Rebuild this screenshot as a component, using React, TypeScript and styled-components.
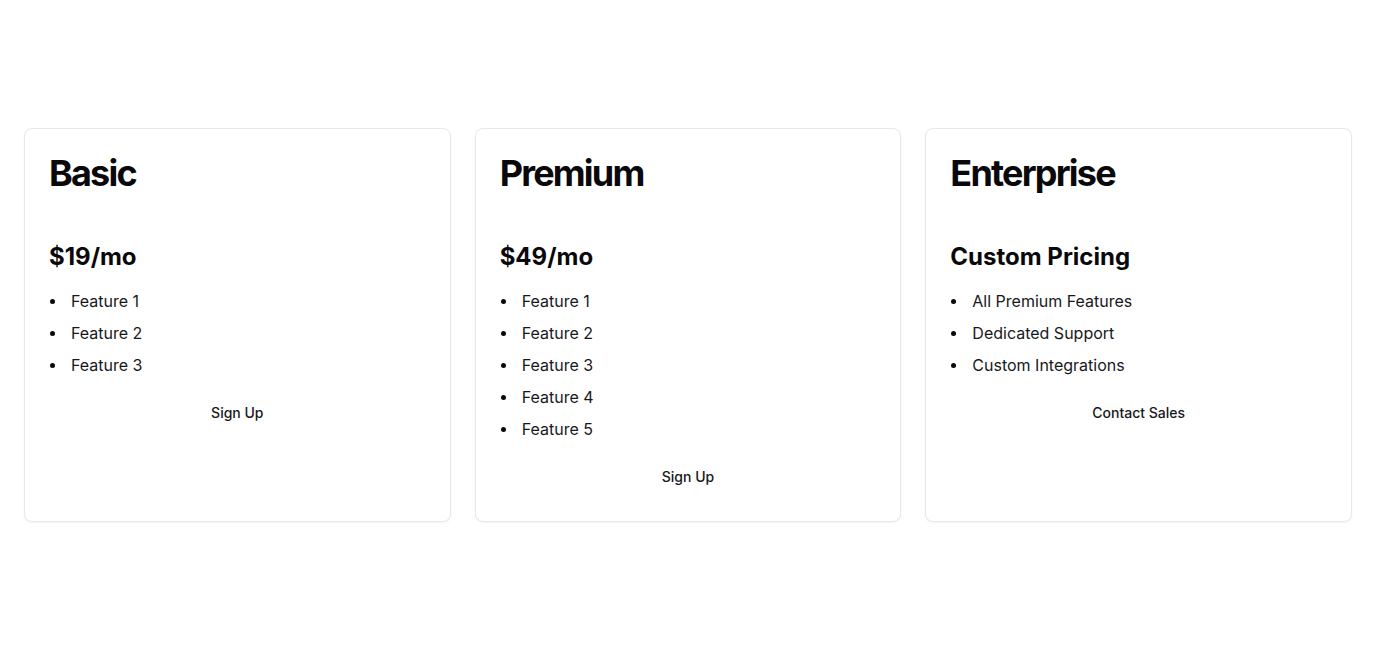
import React from "react";
import styled, { createGlobalStyle } from "styled-components";

const GlobalStyle = createGlobalStyle`
  * { box-sizing: border-box; }
  html, body { margin: 0; padding: 0; background: #ffffff; }
  body {
    font-family: Inter, "Liberation Sans", Arial, sans-serif;
    color: #09090b;
    -webkit-font-smoothing: antialiased;
  }
`;

const Page = styled.main`
  min-height: 650px;
  display: flex;
  align-items: center;
  padding: 0 24px;
`;

const Grid = styled.div`
  width: 100%;
  display: grid;
  grid-template-columns: repeat(3, 1fr);
  gap: 24px;
`;

const Card = styled.section`
  display: flex;
  flex-direction: column;
  border: 1px solid #e8e8ea;
  border-radius: 8px;
  background: #ffffff;
  box-shadow: 0 1px 2px rgba(0, 0, 0, 0.05);
`;

const Header = styled.div`
  padding: 24px 24px 24px;
`;

const Title = styled.h2`
  margin: 0;
  font-size: 36px;
  line-height: 40px;
  font-weight: 700;
  letter-spacing: -0.05em;
  color: #09090b;
`;

const Content = styled.div`
  padding: 0 24px 25px;
  display: flex;
  flex-direction: column;
`;

const Price = styled.p`
  margin: 24px 0 16px;
  font-size: 24px;
  line-height: 32px;
  font-weight: 700;
  color: #09090b;
`;

const List = styled.ul`
  margin: 0;
  padding: 0;
  list-style: none;
  display: flex;
  flex-direction: column;
  gap: 8px;
`;

const Item = styled.li`
  display: flex;
  align-items: center;
  font-size: 16px;
  line-height: 24px;
  color: #18181b;
`;

const Bullet = styled.span`
  width: 5px;
  height: 5px;
  border-radius: 50%;
  background: #09090b;
  margin: 1px 16px 0 1px;
  flex: none;
`;

const Action = styled.button`
  margin-top: 15px;
  height: 40px;
  width: 100%;
  border: 0;
  background: transparent;
  border-radius: 6px;
  font-family: inherit;
  font-size: 14px;
  font-weight: 500;
  color: #18181b;
  cursor: pointer;
`;

const plans = [
  { name: "Basic", price: "$19/mo", features: ["Feature 1", "Feature 2", "Feature 3"], action: "Sign Up" },
  { name: "Premium", price: "$49/mo", features: ["Feature 1", "Feature 2", "Feature 3", "Feature 4", "Feature 5"], action: "Sign Up" },
  { name: "Enterprise", price: "Custom Pricing", features: ["All Premium Features", "Dedicated Support", "Custom Integrations"], action: "Contact Sales" },
];

export default function App() {
  return (
    <>
      <GlobalStyle />
      <Page>
        <Grid>
          {plans.map((p) => (
            <Card key={p.name}>
              <Header>
                <Title>{p.name}</Title>
              </Header>
              <Content>
                <Price>{p.price}</Price>
                <List>
                  {p.features.map((f) => (
                    <Item key={f}>
                      <Bullet />
                      {f}
                    </Item>
                  ))}
                </List>
                <Action>{p.action}</Action>
              </Content>
            </Card>
          ))}
        </Grid>
      </Page>
    </>
  );
}
